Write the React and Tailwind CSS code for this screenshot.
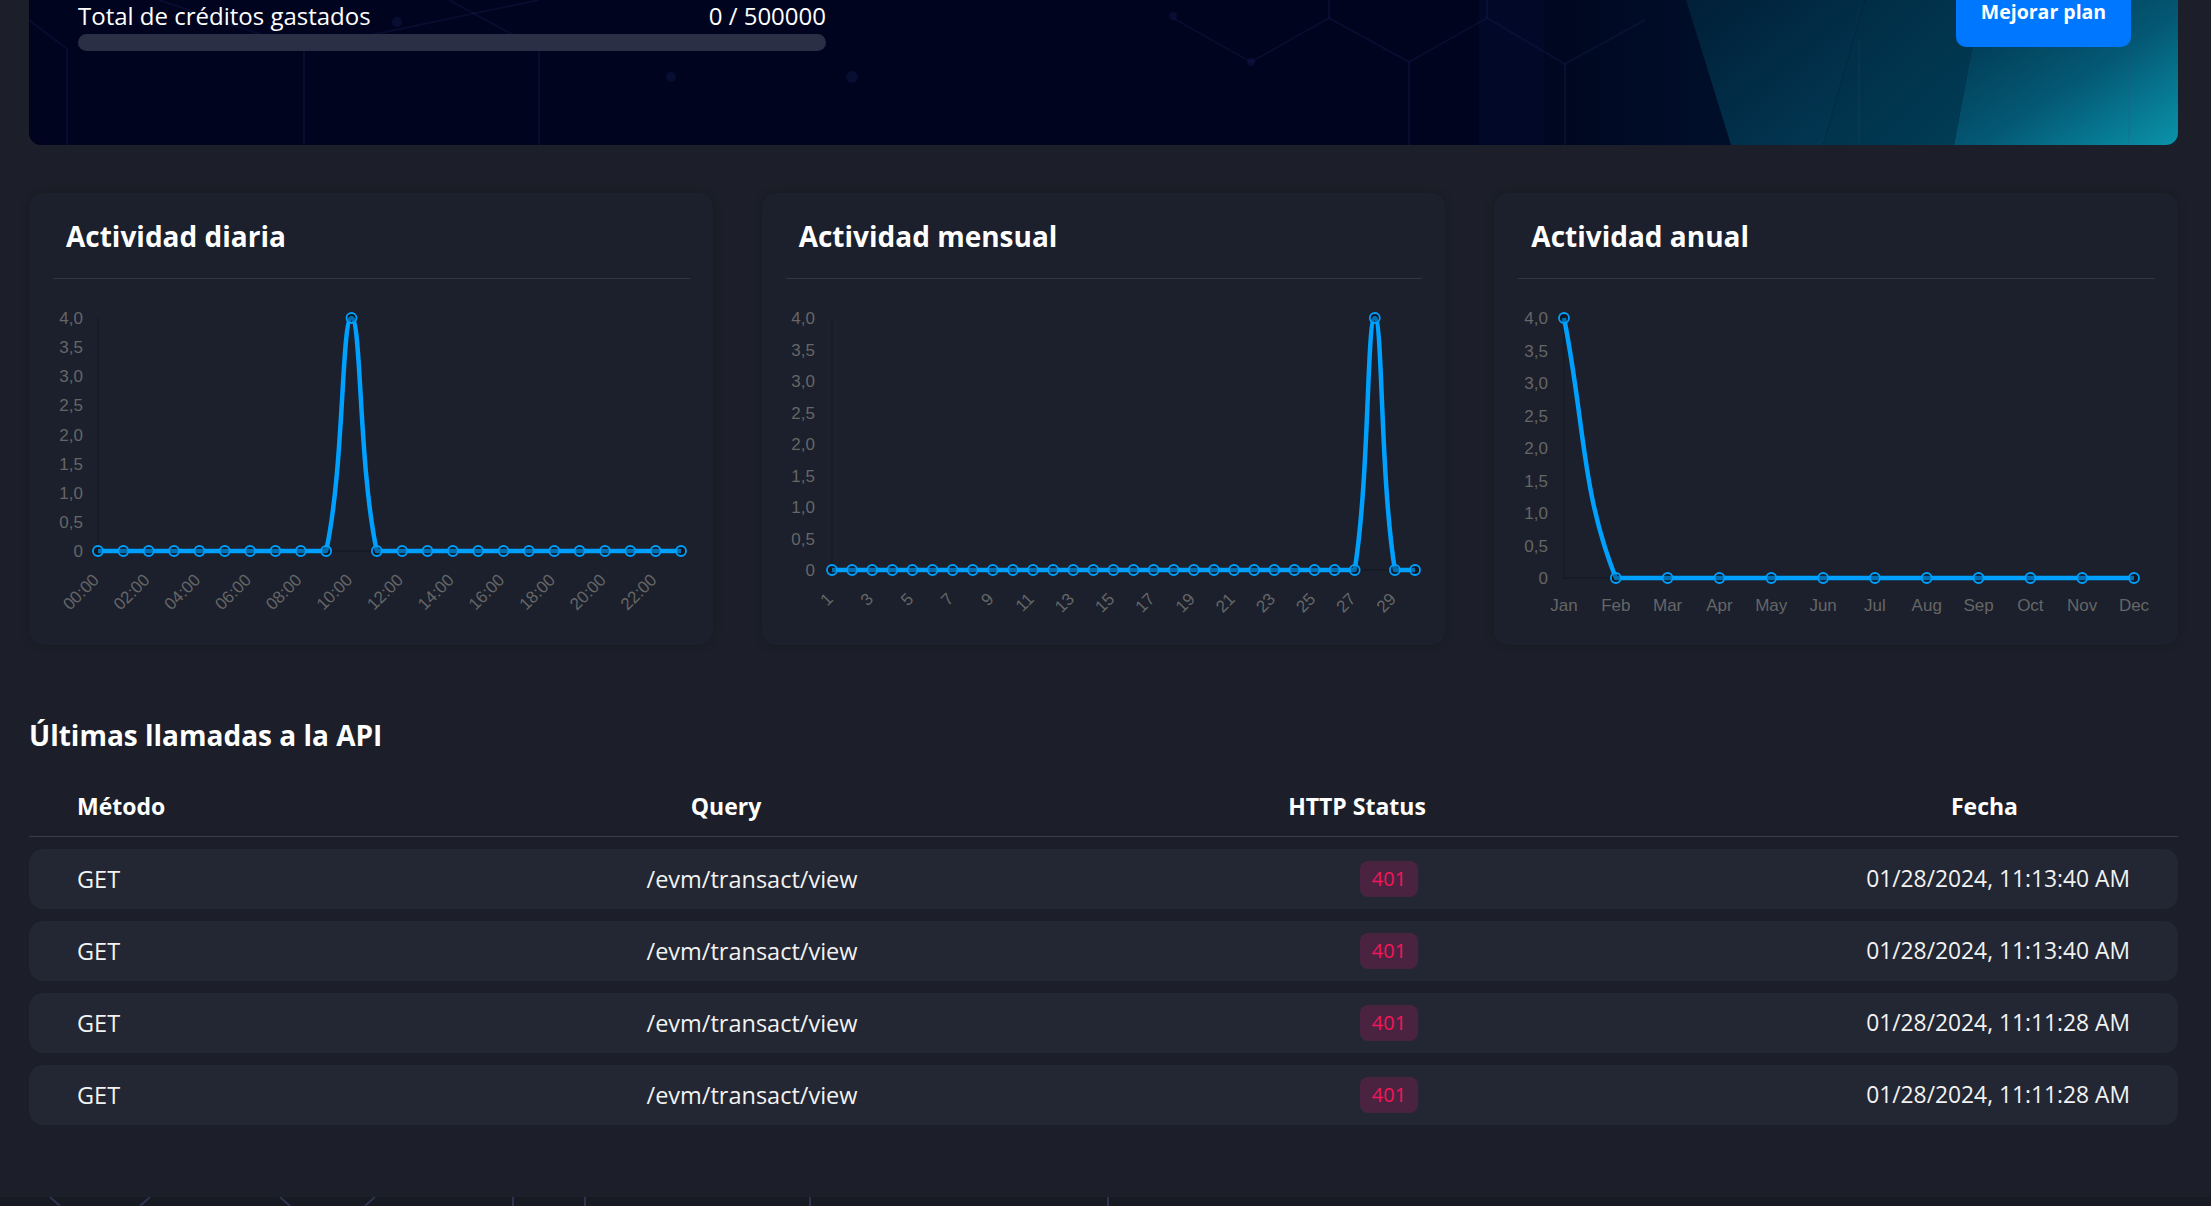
import React from "react";

const blue = "#00a0ff";

function splinePath(pts, top, bottom) {
  const t = 0.4;
  const clamp = (y) => Math.max(top, Math.min(bottom, y));
  const cps = pts.map((p, i) => {
    const prev = pts[i - 1] || p;
    const next = pts[i + 1] || p;
    const d01 = Math.hypot(p.x - prev.x, p.y - prev.y);
    const d12 = Math.hypot(next.x - p.x, next.y - p.y);
    let s01 = d01 / (d01 + d12);
    let s12 = d12 / (d01 + d12);
    if (isNaN(s01)) s01 = 0;
    if (isNaN(s12)) s12 = 0;
    const fa = t * s01;
    const fb = t * s12;
    return {
      a: { x: p.x - fa * (next.x - prev.x), y: clamp(p.y - fa * (next.y - prev.y)) },
      b: { x: p.x + fb * (next.x - prev.x), y: clamp(p.y + fb * (next.y - prev.y)) },
    };
  });
  let d = `M${pts[0].x},${pts[0].y}`;
  for (let i = 1; i < pts.length; i++) {
    d += ` C${cps[i - 1].b.x},${cps[i - 1].b.y} ${cps[i].a.x},${cps[i].a.y} ${pts[i].x},${pts[i].y}`;
  }
  return d;
}

const yTicks = ["4,0", "3,5", "3,0", "2,5", "2,0", "1,5", "1,0", "0,5", "0"];

function LineChart({ data, labels, every, rotate, labelRight, axisX, lastX, topY, zeroY }) {
  const step = (lastX - axisX) / (data.length - 1);
  const pts = data.map((v, i) => ({ x: axisX + i * step, y: zeroY - (v / 4) * (zeroY - topY) }));
  const d = splinePath(pts, topY, zeroY);
  return (
    <svg width="637" height="330" viewBox="0 0 637 330" className="block">
      <line x1={axisX} y1={topY} x2={axisX} y2={zeroY} stroke="rgba(0,0,0,0.28)" strokeWidth="1" />
      <line x1={axisX} y1={zeroY} x2={lastX} y2={zeroY} stroke="rgba(0,0,0,0.28)" strokeWidth="1" />
      {yTicks.map((l, i) => (
        <text
          key={l}
          x={labelRight}
          y={topY + (i * (zeroY - topY)) / 8 + 6}
          textAnchor="end"
          fontSize="17"
          fill="#666666"
          fontFamily="'Liberation Sans', Arial, sans-serif"
        >
          {l}
        </text>
      ))}
      {labels.map((l, i) => {
        const x = axisX + i * every * step;
        if (rotate) {
          const ex = x + 2;
          const ey = zeroY + 30;
          return (
            <text
              key={l}
              x={ex}
              y={ey}
              textAnchor="end"
              fontSize="17"
              fill="#666666"
              fontFamily="'Liberation Sans', Arial, sans-serif"
              transform={`rotate(-45 ${ex} ${ey})`}
            >
              {l}
            </text>
          );
        }
        return (
          <text
            key={l}
            x={x}
            y={zeroY + 33}
            textAnchor="middle"
            fontSize="17"
            fill="#666666"
            fontFamily="'Liberation Sans', Arial, sans-serif"
          >
            {l}
          </text>
        );
      })}
      <path d={d} fill="none" stroke={blue} strokeWidth="4.5" strokeLinejoin="round" />
      {pts.map((p, i) => (
        <circle key={i} cx={p.x} cy={p.y} r="5" fill="rgba(0,0,0,0.3)" stroke={blue} strokeWidth="1.8" />
      ))}
    </svg>
  );
}

function Card({ title, children }) {
  return (
    <div className="h-[452px] rounded-[14px] bg-[#1b202c] pl-[24px] pr-[23px] pt-[26px] shadow-[0_0_10px_rgba(0,0,0,0.2)]">
      <h2 className="pl-[13px] text-[28px] font-bold leading-[34px] text-white">{title}</h2>
      <div className="mt-[25px] h-px bg-[#33363e]" />
      <div className="mt-[21px]">{children}</div>
    </div>
  );
}

function BannerArt() {
  const hex = "rgba(60,70,150,0.13)";
  return (
    <svg className="absolute inset-0 h-full w-full" viewBox="0 0 2149 145" preserveAspectRatio="none">
      <defs>
        <linearGradient id="gc" x1="0" y1="0" x2="1" y2="1">
          <stop offset="0" stopColor="#01304a" />
          <stop offset="0.55" stopColor="#045874" />
          <stop offset="1" stopColor="#0a93aa" />
        </linearGradient>
        <linearGradient id="ga" x1="0" y1="0" x2="1" y2="1">
          <stop offset="0" stopColor="#011f38" />
          <stop offset="1" stopColor="#023a55" />
        </linearGradient>
        <linearGradient id="gb" x1="0" y1="0" x2="1" y2="1">
          <stop offset="0" stopColor="#012b44" />
          <stop offset="1" stopColor="#013d56" />
        </linearGradient>
        <linearGradient id="gd" x1="0" y1="0" x2="1" y2="0">
          <stop offset="0" stopColor="#000720" />
          <stop offset="1" stopColor="#000f2a" />
        </linearGradient>
      </defs>
      <rect x="0" y="0" width="2149" height="145" fill="#01041f" />
      <rect x="1450" y="0" width="70" height="145" fill="#020828" />
      <polygon points="1515,0 1657,0 1702,145 1515,145" fill="url(#gd)" />
      <polygon points="1657,0 1836,0 1794,145 1702,145" fill="url(#ga)" />
      <polygon points="1836,0 1952,0 1925,145 1794,145" fill="url(#gb)" />
      <polygon points="1952,0 2149,0 2149,145 1925,145" fill="url(#gc)" />
      <g stroke={hex} strokeWidth="2" fill="none">
        <polyline points="0,20 38,49 38,145" />
        <polyline points="130,0 275,49 275,145" />
        <polyline points="275,49 510,0" />
        <polyline points="420,0 510,49 510,145" />
        <polyline points="1144,18 1222,62 1300,18 1380,62 1458,18 1536,64 1616,20" />
        <polyline points="1300,18 1300,0" />
        <polyline points="1458,18 1458,0" />
        <polyline points="1380,62 1380,145" />
        <polyline points="1536,64 1536,145" />
        <polyline points="1830,40 1830,145" />
        <polyline points="2100,40 2100,145" />
      </g>
      <g fill="rgba(60,70,170,0.14)">
        <circle cx="368" cy="22" r="5" />
        <circle cx="642" cy="77" r="5" />
        <circle cx="823" cy="77" r="6" />
        <circle cx="1144" cy="16" r="4" />
        <circle cx="1222" cy="62" r="4" />
      </g>
    </svg>
  );
}

const daily = Array.from({ length: 24 }, (_, i) => (i === 10 ? 4 : 0));
const dailyLabels = Array.from({ length: 12 }, (_, i) => `${String(i * 2).padStart(2, "0")}:00`);
const monthly = Array.from({ length: 30 }, (_, i) => (i === 27 ? 4 : 0));
const monthlyLabels = Array.from({ length: 15 }, (_, i) => String(i * 2 + 1));
const annual = [4, 0, 0, 0, 0, 0, 0, 0, 0, 0, 0, 0];
const months = ["Jan", "Feb", "Mar", "Apr", "May", "Jun", "Jul", "Aug", "Sep", "Oct", "Nov", "Dec"];

const calls = [
  { method: "GET", query: "/evm/transact/view", status: 401, date: "01/28/2024, 11:13:40 AM" },
  { method: "GET", query: "/evm/transact/view", status: 401, date: "01/28/2024, 11:13:40 AM" },
  { method: "GET", query: "/evm/transact/view", status: 401, date: "01/28/2024, 11:11:28 AM" },
  { method: "GET", query: "/evm/transact/view", status: 401, date: "01/28/2024, 11:11:28 AM" },
];

export default function App() {
  return (
    <div className="flex h-[1206px] flex-col overflow-hidden bg-[#1c1f29] font-['Open_Sans',sans-serif] text-[#f2f2f2]">
      <div className="pl-[29px] pr-[33px] pb-[72px]">
        {/* banner */}
        <div className="relative h-[145px] overflow-hidden rounded-b-[12px]">
          <BannerArt />
          <div className="relative flex justify-between pl-[49px] pr-[47px]">
            <div className="w-[748px] pt-[4px]">
              <div className="flex justify-between text-[24px] leading-[24px] text-white">
                <span>Total de créditos gastados</span>
                <span>0 / 500000</span>
              </div>
              <div className="mt-[6px] h-[17px] rounded-full bg-[#2b2f46]" />
            </div>
            <button className="flex h-[47px] w-[175px] justify-center rounded-b-[10px] bg-[#0077ff] pt-[2px] text-white">
              <span className="text-[19.5px] font-bold leading-[20px]">Mejorar plan</span>
            </button>
          </div>
        </div>

        {/* charts */}
        <div className="mt-[48px] grid grid-cols-3 gap-[49px]">
          <Card title="Actividad diaria">
            <LineChart data={daily} labels={dailyLabels} every={2} rotate labelRight={30} axisX={45} lastX={628} topY={18} zeroY={251} />
          </Card>
          <Card title="Actividad mensual">
            <LineChart data={monthly} labels={monthlyLabels} every={2} rotate labelRight={29} axisX={46} lastX={629} topY={18} zeroY={270} />
          </Card>
          <Card title="Actividad anual">
            <LineChart data={annual} labels={months} every={1} labelRight={30} axisX={46} lastX={616} topY={18} zeroY={278} />
          </Card>
        </div>

        {/* api calls */}
        <h2 className="mt-[73px] text-[28px] font-bold leading-[34px] text-white">Últimas llamadas a la API</h2>
        <div className="mt-[39px] grid grid-cols-[323px_652px_610px_1fr] border-b border-[#3a3d47] px-[48px] pb-[15px] text-[23px] font-bold leading-[30px] text-white">
          <div>Método</div>
          <div className="text-center">Query</div>
          <div className="text-center">HTTP Status</div>
          <div className="pr-[112px] text-right">Fecha</div>
        </div>
        <div className="mt-[12px] flex flex-col gap-[12px]">
          {calls.map((c, i) => (
            <div
              key={i}
              className="grid h-[60px] grid-cols-[323px_652px_610px_1fr] items-center rounded-[14px] bg-[#222733] px-[48px] text-[23.5px] leading-[30px]"
            >
              <div>{c.method}</div>
              <div className="pl-[52px] text-center">{c.query}</div>
              <div className="flex justify-center pl-[64px]">
                <span className="rounded-[8px] bg-[#4a2340] px-[12px] py-[3px] text-[20px] leading-[30px] text-[#f2175c]">
                  {c.status}
                </span>
              </div>
              <div className="text-right text-[22.8px]">{c.date}</div>
            </div>
          ))}
        </div>
      </div>
      <div className="relative flex-1 bg-[#171a23]">
        <svg className="absolute inset-0 h-full w-full" preserveAspectRatio="none" viewBox="0 0 2211 9">
          <g stroke="rgba(90,100,170,0.35)" strokeWidth="2">
            <line x1="50" y1="0" x2="60" y2="9" />
            <line x1="150" y1="0" x2="140" y2="9" />
            <line x1="280" y1="0" x2="290" y2="9" />
            <line x1="375" y1="0" x2="365" y2="9" />
            <line x1="513" y1="0" x2="513" y2="9" />
            <line x1="585" y1="0" x2="585" y2="9" />
            <line x1="810" y1="0" x2="810" y2="9" />
            <line x1="1108" y1="0" x2="1108" y2="9" />
          </g>
        </svg>
      </div>
    </div>
  );
}
